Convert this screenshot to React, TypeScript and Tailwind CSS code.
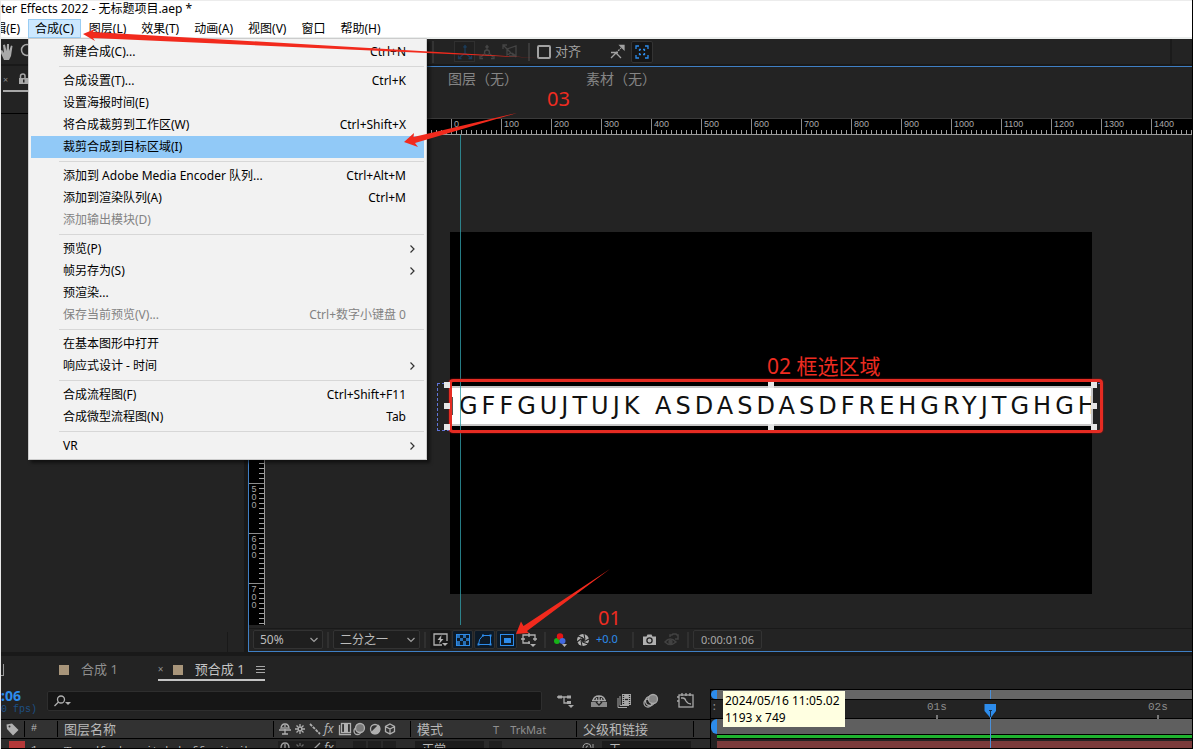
import type { ReactNode } from "react";

type MenuEntry = { label: string; keys?: string; sub?: boolean; disabled?: boolean; active?: boolean };

const menuBar = ["辑(E)", "合成(C)", "图层(L)", "效果(T)", "动画(A)", "视图(V)", "窗口", "帮助(H)"];

const menuGroups: MenuEntry[][] = [
  [{ label: "新建合成(C)...", keys: "Ctrl+N" }],
  [
    { label: "合成设置(T)...", keys: "Ctrl+K" },
    { label: "设置海报时间(E)" },
    { label: "将合成裁剪到工作区(W)", keys: "Ctrl+Shift+X" },
    { label: "裁剪合成到目标区域(I)", active: true },
  ],
  [
    { label: "添加到 Adobe Media Encoder 队列...", keys: "Ctrl+Alt+M" },
    { label: "添加到渲染队列(A)", keys: "Ctrl+M" },
    { label: "添加输出模块(D)", disabled: true },
  ],
  [
    { label: "预览(P)", sub: true },
    { label: "帧另存为(S)", sub: true },
    { label: "预渲染..." },
    { label: "保存当前预览(V)...", keys: "Ctrl+数字小键盘 0", disabled: true },
  ],
  [{ label: "在基本图形中打开" }, { label: "响应式设计 - 时间", sub: true }],
  [
    { label: "合成流程图(F)", keys: "Ctrl+Shift+F11" },
    { label: "合成微型流程图(N)", keys: "Tab" },
  ],
  [{ label: "VR", sub: true }],
];

// divisions under the open menu carry no label
const rulerX = Array.from({ length: 30 }, (_, i) => (i < 4 || i > 18 ? "" : String((i - 4) * 100)));
const rulerY = Array.from({ length: 10 }, (_, i) => (i < 6 ? "" : String((i - 1) * 100)));

function CompositionMenu() {
  return (
    <div className="absolute left-0 top-5 z-20 w-[399px] border border-[#cccccc] bg-[#f2f2f2] p-[2px] text-black shadow-[3px_3px_3px_rgba(0,0,0,0.5)]">
      {menuGroups.map((group, g) => (
        <div key={g}>
          {g > 0 && <div className="my-[3px] ml-7 h-px bg-[#d7d7d7]" />}
          {group.map((item) => (
            <button
              key={item.label}
              disabled={item.disabled}
              className={`flex h-[22px] w-full items-center justify-between pl-8 text-left text-xs whitespace-nowrap ${
                item.active ? "bg-[#91c9f7]" : ""
              } ${item.disabled ? "text-[#838383]" : ""} ${item.sub ? "pr-2" : "pr-[18px]"}`}
            >
              <span>{item.label}</span>
              {item.keys && <span>{item.keys}</span>}
              {item.sub && (
                <svg className="h-2 w-2" viewBox="0 0 8 8" fill="none" stroke="#333" strokeWidth="1.2">
                  <path d="M2.500 0.500L6 4L2.500 7.500" />
                </svg>
              )}
            </button>
          ))}
        </div>
      ))}
    </div>
  );
}

function TopBar() {
  return (
    <header className="bg-white text-xs text-black">
      <div className="h-px bg-[#ececec]" />
      <div className="h-[17px] leading-[15px] whitespace-nowrap">ter Effects 2022 - 无标题项目.aep *</div>
      <nav className="flex h-[21px] gap-px border-b-2 border-[#ebeeed]">
        {menuBar.map((name, i) =>
          i === 1 ? (
            <div key={name} className="relative shrink-0 pt-px">
              <button className="block h-[19px] border border-[#99cdf3] bg-[#cce8ff] px-[6px] leading-[18px]">{name}</button>
              <CompositionMenu />
            </div>
          ) : i === 0 ? (
            <button key={name} className="flex w-[26px] shrink-0 justify-end overflow-hidden pr-[7px] leading-[21px] whitespace-nowrap">
              {name}
            </button>
          ) : (
            <button key={name} className="shrink-0 px-[7px] leading-[21px] whitespace-nowrap">
              {name}
            </button>
          )
        )}
      </nav>
    </header>
  );
}

function Toolbar() {
  return (
    <div className="flex h-[25px] items-center">
      <svg className="h-5 w-8 shrink-0" viewBox="0 0 32 20" fill="none" stroke="#a9a9a9">
        <path d="M3 18L-1 9L1 8L3 11L2 3L4 2.500L5.500 9L6 2H8L8 9L10 3.500L11.500 4L10 14L8 18Z" fill="#a9a9a9" stroke="none" />
        <circle cx="26" cy="8" r="5.500" strokeWidth="1.500" />
      </svg>
      <div className="ml-[399px] h-[22px] w-[2px] bg-[#353535]" />
      <button aria-label="本地轴模式" className="ml-5 flex h-[21px] w-[21px] items-center justify-center border border-[#303030] bg-[#202020]">
        <svg className="h-4 w-4" viewBox="0 0 16 16" fill="none" stroke="#1b3b58" strokeWidth="1.300">
          <path d="M8 2V9L2 14M8 9L14 14M6.500 3.500L8 1.500L9.500 3.500M1.500 11.500V14.500H4.500M14.500 11.500V14.500H11.500" />
        </svg>
      </button>
      <button aria-label="世界轴模式" className="ml-1">
        <svg className="h-4 w-4" viewBox="0 0 16 16" fill="none" stroke="#444" strokeWidth="1.300">
          <path d="M8 2V6M5 10L2 13M11 10L14 13M6.500 3.500L8 1.500L9.500 3.500M1 11.500V14.500H4M15 11.500V14.500H12" />
          <circle cx="8" cy="8.500" r="2.500" />
        </svg>
      </button>
      <button aria-label="视图轴模式" className="ml-[7px]">
        <svg className="h-4 w-4" viewBox="0 0 16 16" fill="none" stroke="#444" strokeWidth="1.300">
          <path d="M1 5V1H5M1 1L9 9M5 5L14 2V12L10 9M5 5V11L9 9L14 13M7 12H13" />
        </svg>
      </button>
      <div className="ml-[10px] h-[18px] w-[2px] bg-[#3a3a3a]" />
      <label className="ml-[7px] flex items-center gap-1 text-[13px] whitespace-nowrap text-[#a2a2a2]">
        <input type="checkbox" className="h-[14px] w-[14px] appearance-none rounded-[2px] border-2 border-[#a2a2a2]" />
        对齐
      </label>
      <button aria-label="边缘外对齐" className="ml-[29px]">
        <svg className="h-4 w-4" viewBox="0 0 16 16" fill="none" stroke="#a2a2a2" strokeWidth="1.300">
          <path d="M1 14L6 9L11 14M1 8.500H8" />
          <path d="M6 9L11 4" strokeDasharray="2 1" />
          <path d="M10 1.500H14V5.500L12.500 4Z" fill="#a2a2a2" />
        </svg>
      </button>
      <button aria-label="内部特征对齐" className="ml-[5px] flex h-[22px] w-[22px] items-center justify-center rounded-[2px] border border-[#333] bg-[#161616]">
        <svg className="h-[14px] w-[14px]" viewBox="0 0 14 14" fill="none" stroke="#2d8ceb" strokeWidth="1.300">
          <path d="M1 4V1H4M10 1H13V4M13 10V13H10M4 13H1V10" />
          <path d="M4.500 6V4.500H6M8 4.500H9.500V6M9.500 8V9.500H8M6 9.500H4.500V8" />
        </svg>
      </button>
      <div className="ml-auto mr-5 h-full w-[2px] bg-[#1b1b1b]" />
    </div>
  );
}

function ProjectPanel() {
  return (
    <aside className="flex w-[243px] shrink-0 flex-col bg-[#232323]">
      <div className="flex h-[48px] items-start border-b border-black">
        <div className="ml-[2px] mt-[7px] flex h-[19px] w-[200px] items-start gap-[10px] border-b-2 border-[#a8a8a8]">
          <span className="w-[6px] text-[9px] leading-[14px] text-[#8a8a8a]">×</span>
          <svg className="h-[13px] w-[11px]" viewBox="0 0 11 13" fill="none">
            <path d="M1.500 6V3Q1.500 1 4 1Q6 1 6 3V5" stroke="#a8a8a8" strokeWidth="1.500" />
            <rect x="0" y="5" width="9" height="6" fill="#a8a8a8" />
            <rect x="4" y="6.500" width="1.500" height="3" fill="#232323" />
          </svg>
        </div>
      </div>
      <div className="flex-1" />
      <div className="mr-4 h-5 border-r border-[#191919]" />
    </aside>
  );
}

function HorizontalRuler() {
  return (
    <div className="flex h-4 shrink-0 overflow-hidden border-b border-[#9a9a9a] bg-black pl-[2px]">
      {rulerX.map((n, i) => (
        <div key={i} className="flex w-[50px] shrink-0 flex-col justify-between border-l border-[#8c8c8c]">
          <span className="h-[11px] pl-[2px] font-['Liberation_Sans',sans-serif] text-[9px] leading-[11px] text-[#a8a8a8]">{n}</span>
          <div className="ml-1 h-1 bg-[repeating-linear-gradient(90deg,#a0a0a0_0_1px,transparent_1px_5px)]" />
        </div>
      ))}
    </div>
  );
}

function VerticalRuler() {
  return (
    <div className="w-4 shrink-0 overflow-hidden border-r border-[#9a9a9a] bg-black pt-[48px]">
      {rulerY.map((n, i) => (
        <div key={i} className="flex h-[50px] justify-between border-t border-[#8c8c8c]">
          <span className="flex w-[10px] flex-col items-center pt-px font-['Liberation_Sans',sans-serif] text-[9px] leading-[8px] text-[#a8a8a8]">
            {n.split("").map((d, k) => (
              <span key={k}>{d}</span>
            ))}
          </span>
          <div className="mt-1 w-[5px] bg-[repeating-linear-gradient(180deg,#a0a0a0_0_1px,transparent_1px_5px)]" />
        </div>
      ))}
    </div>
  );
}

function Canvas() {
  return (
    <div className="relative min-w-0 flex-1 overflow-hidden">
      <div className="absolute left-[185px] top-[97px] h-[362px] w-[642px] bg-black" />
      {/* selected text layer and its bounds */}
      <div className="absolute left-[172px] top-[248px] h-[48px] w-[664px] border border-dashed border-[#5f74d8]" />
      <div className="absolute left-[185px] top-[245px] h-[53px] w-[642px] bg-black" />
      <div className="absolute left-[186px] top-[251px] flex h-[40px] w-[642px] items-center overflow-hidden border-y-2 border-r-2 border-[#c8c6c6] bg-white font-['DejaVu_Sans',sans-serif] text-2xl tracking-[4px] whitespace-nowrap text-[#111]">
        <span className="mr-[6px] h-[18px] w-[2px] shrink-0 bg-[#555]" />
        GFFGUJTUJK ASDASDASDFREHGRYJTGHGH
      </div>
      <div className="absolute left-[195px] top-0 h-full w-px bg-[#2f9aa5]/80" />
      <div className="absolute left-[184px] top-[244px] h-[54px] w-[654px] rounded-[4px] border-[3px] border-[#e52b22] shadow-[0_0_2px_#a01010]" />
      <svg className="absolute left-[179px] top-[247px] h-[50px] w-[654px]" viewBox="0 0 654 50" fill="#e6e6e6">
        <path d="M0 0h6v6h-6zM0 21h6v6h-6zM0 42h6v6h-6zM647 0h6v6h-6zM647 21h6v6h-6zM647 42h6v6h-6zM324 0h6v6h-6zM324 42h6v6h-6z" />
      </svg>
      <span className="absolute left-[502px] top-[216px] text-[21px] leading-[30px] whitespace-nowrap text-[#ee2c21]">02 框选区域</span>
      <span className="absolute left-[333px] top-[468px] text-xl leading-[30px] text-[#ee2c21]">01</span>
    </div>
  );
}

function FooterSelect({ label, options, width }: { label: string; options: string[]; width: string }) {
  return (
    <div className={`relative h-[19px] ${width}`}>
      <select aria-label={label} className="block h-full w-full appearance-none rounded-[2px] border border-[#333] bg-[#1f1f1f] px-[6px] text-xs text-[#bcbcbc]">
        {options.map((o) => (
          <option key={o}>{o}</option>
        ))}
      </select>
      <svg className="pointer-events-none absolute right-1 top-[7px] h-[6px] w-[10px]" viewBox="0 0 10 6" fill="none" stroke="#a0a0a0" strokeWidth="1.200">
        <path d="M1.500 1L5 4.500L8.500 1" />
      </svg>
    </div>
  );
}

function Toggle({ label, on, children }: { label: string; on?: boolean; children: ReactNode }) {
  return (
    <button
      aria-label={label}
      className={`flex h-[19px] w-[21px] items-center justify-center rounded-[2px] border ${on ? "border-[#303030] bg-[#0c1a28]" : "border-[#1b1b1b] bg-[#171717]"}`}
    >
      {children}
    </button>
  );
}

function ViewerFooter() {
  return (
    <div className="mt-[3px] flex h-[23px] shrink-0 items-center border-t border-[#191919] pb-px pl-1 text-xs">
      <FooterSelect label="放大率" options={["50%"]} width="w-[70px]" />
      <div className="mx-1 h-4 w-[2px] bg-[#303030]" />
      <FooterSelect label="分辨率" options={["二分之一"]} width="w-[87px]" />
      <div className="mx-1 h-4 w-[2px] bg-[#303030]" />
      <div className="flex gap-px">
        <Toggle label="快速预览">
          <svg className="h-[14px] w-[15px] shrink-0" viewBox="0 0 15 14" fill="none" stroke="#b0b0b0" strokeWidth="1.300">
            <path d="M9 12H1V1H14V8" />
            <path d="M8.500 2L4.500 7H7L6 11L10.500 6H8Z" fill="#b0b0b0" stroke="none" />
            <path d="M9 10H15L12 13Z" fill="#b0b0b0" stroke="none" />
          </svg>
        </Toggle>
        <Toggle label="透明网格" on>
          <svg className="h-3 w-[14px] shrink-0" viewBox="0 0 14 12" fill="none">
            <rect x="0.500" y="0.500" width="13" height="11" stroke="#2d8ceb" />
            <path d="M1 1h3v3h-3zM7 1h3v3h-3zM4 4h3v3h-3zM10 4h3v3h-3zM1 7h3v4h-3zM7 7h3v4h-3z" fill="#286fb5" />
          </svg>
        </Toggle>
        <Toggle label="蒙版可见性" on>
          <svg className="h-3 w-[15px] shrink-0" viewBox="0 0 15 12" fill="none" stroke="#2d8ceb">
            <path d="M1.500 10.500Q1.500 5 6 1.500H13.500V10.500Z" />
            <path d="M5 .500h2v2h-2zM12.500 .500h2v2h-2zM.500 9.500h2v2h-2zM12.500 9.500h2v2h-2z" fill="#2d8ceb" stroke="none" />
          </svg>
        </Toggle>
        <Toggle label="目标区域" on>
          <svg className="h-3 w-[14px] shrink-0" viewBox="0 0 14 12" fill="none">
            <rect x="0.500" y="0.500" width="13" height="11" stroke="#2d8ceb" />
            <rect x="4" y="4" width="7" height="5" fill="#2d8ceb" />
          </svg>
        </Toggle>
        <button aria-label="网格和参考线" className="flex w-[21px] items-center justify-center">
          <svg className="h-4 w-4 shrink-0" viewBox="0 0 16 16" fill="none" stroke="#b0b0b0" strokeWidth="1.300">
            <path d="M9 11H2V3H14V9M8 1V5M8 9V12M0 7H4M12 7H16" />
            <path d="M9 12H15L12 15Z" fill="#b0b0b0" stroke="none" />
          </svg>
        </button>
      </div>
      <div className="mx-[5px] h-4 w-[2px] bg-[#303030]" />
      <button aria-label="显示通道" className="ml-[2px]">
        <svg className="h-4 w-4" viewBox="0 0 16 16">
          <circle cx="4" cy="9" r="3" fill="#17b317" />
          <circle cx="7" cy="4.500" r="3.200" fill="#e31414" />
          <circle cx="9.500" cy="9" r="3" fill="#4268e0" />
          <path d="M9 12H14L11.500 15Z" fill="#b0b0b0" />
        </svg>
      </button>
      <button aria-label="重置曝光度" className="ml-[7px]">
        <svg className="h-[14px] w-[14px]" viewBox="0 0 14 14">
          <circle cx="7" cy="7" r="6" fill="#b0b0b0" />
          <circle cx="7" cy="7" r="2" fill="#222" />
          <path d="M7 5L2 3M9 6.500L8 1M8.500 8.500L13 6M6.500 9L12 11M5 7.500L6 13M5.200 5.800L1 9" stroke="#222" strokeWidth="1.100" />
        </svg>
      </button>
      <span className="ml-[6px] w-8 text-[11px] text-[#2d8ceb]">+0.0</span>
      <div className="ml-1 h-4 w-[2px] bg-[#303030]" />
      <button aria-label="拍摄快照" className="ml-2">
        <svg className="h-[14px] w-[15px]" viewBox="0 0 15 14">
          <path d="M1 3.500H4.500L5.500 1.500H9.500L10.500 3.500H14V12H1Z" fill="#b0b0b0" />
          <circle cx="7.500" cy="7.500" r="2.600" fill="#b0b0b0" stroke="#222" strokeWidth="1.300" />
        </svg>
      </button>
      <button aria-label="显示快照" className="ml-[7px]">
        <svg className="h-[14px] w-4" viewBox="0 0 16 14" fill="none" stroke="#424242" strokeWidth="1.500">
          <path d="M1 9Q6 3 12 9Q6 14 1 9Z" />
          <circle cx="6.500" cy="9" r="1.500" fill="#424242" />
          <path d="M6 4V2H8L9 1H12L13 2H14V6H11" />
        </svg>
      </button>
      <div className="ml-[7px] h-4 w-[2px] bg-[#303030]" />
      <button className="ml-1 h-[19px] w-[69px] rounded-[2px] border border-[#333] text-center text-[11px] leading-[17px] whitespace-nowrap text-[#a8a8a8]">
        0:00:01:06
      </button>
    </div>
  );
}

function Viewer() {
  return (
    <section className="flex min-w-0 flex-1 flex-col border-y border-l border-[#3f7fc4] bg-[#232323]">
      <div className="flex h-[51px] shrink-0 gap-[68px] pl-[199px] pt-[2px] text-sm whitespace-nowrap text-[#858585]">
        <span>图层（无）</span>
        <span>素材（无）</span>
      </div>
      <div className="h-px shrink-0 bg-[#3a3a3a]" />
      <HorizontalRuler />
      <div className="flex min-h-0 flex-1">
        <VerticalRuler />
        <Canvas />
      </div>
      <ViewerFooter />
    </section>
  );
}

function SwitchIcons() {
  return (
    <svg className="h-[14px] w-[122px]" viewBox="0 0 122 14" fill="none" stroke="#b0b0b0" strokeWidth="1.300">
      {/* shy */}
      <path d="M1 8H13M3 7Q3 2 7 2Q11 2 11 7M7 3V12M4 12H10" />
      <path d="M5 5V7M9 5V7" />
      {/* collapse */}
      <path d="M22 2V5M22 9V12M17 7H20M24 7H27M18.500 3.500L20.500 5.500M25.500 3.500L23.500 5.500M18.500 10.500L20.500 8.500M25.500 10.500L23.500 8.500" />
      <circle cx="22" cy="7" r="1.800" />
      {/* quality */}
      <path d="M32 2L42 12" strokeDasharray="3 1" strokeWidth="1.800" />
      {/* frame blend */}
      <path d="M61.500 3V12.500H73" />
      <rect x="63.500" y="1.500" width="9" height="9" />
      <rect x="66" y="2" width="4" height="8" fill="#b0b0b0" stroke="none" />
      {/* motion blur */}
      <circle cx="79.500" cy="9" r="3.500" />
      <circle cx="82" cy="6" r="4.500" fill="#7a7a7a" />
      {/* adjustment */}
      <circle cx="97" cy="7" r="4.500" />
      <path d="M100.500 3.500A4.800 4.800 0 0 1 93.500 10.500Z" fill="#b0b0b0" />
      {/* 3d */}
      <path d="M112 2L116.500 4.500V9.500L112 12L107.500 9.500V4.500ZM107.500 4.500L112 7L116.500 4.500M112 7V12" />
      <text x="46" y="11" fill="#b0b0b0" stroke="none" fontSize="12" fontStyle="italic" fontFamily="Noto Sans">
        fx
      </text>
    </svg>
  );
}

function LayerSwitches() {
  return (
    <svg className="h-[14px] w-[122px]" viewBox="0 0 122 14" fill="none" stroke="#a0a0a0" strokeWidth="1.300">
      <path d="M0 0H58V14H0ZM75 0H88V14H75ZM90 0H103V14H90ZM105 0H118V14H105Z" fill="#1f1f1f" stroke="none" />
      <path d="M1 8H13M3 7Q3 2 7 2Q11 2 11 7M7 3V12" />
      <path d="M22 2V5M18.500 3.500L20.500 5.500M25.500 3.500L23.500 5.500" stroke="#666" />
      <path d="M42 2L32 12" />
      <text x="46" y="11" fill="#b0b0b0" stroke="none" fontSize="12" fontStyle="italic" fontFamily="Noto Sans">
        fx
      </text>
    </svg>
  );
}

function TimelineControls() {
  return (
    <div className="flex h-[30px] shrink-0 items-start">
      <div className="w-[46px] shrink-0">
        <div className="text-sm leading-[13px] font-bold text-[#2d8ceb]">:06</div>
        <div className="font-['Liberation_Mono',monospace] text-[10px] leading-[16px] whitespace-nowrap text-[#1d4f84]">0 fps)</div>
      </div>
      <div className="relative mt-[2px] w-[495px] shrink-0">
        <input aria-label="搜索图层" className="block h-5 w-full rounded-[2px] border border-[#2e2e2e] bg-[#161616] pl-7 text-xs text-[#b0b0b0]" />
        <svg className="pointer-events-none absolute left-[7px] top-1 h-3 w-[17px]" viewBox="0 0 17 12" fill="none" stroke="#b0b0b0" strokeWidth="1.300">
          <circle cx="7" cy="4.500" r="3.500" />
          <path d="M4.500 7L0.500 11" />
          <path d="M11 7H17L14 10Z" fill="#b0b0b0" stroke="none" />
        </svg>
      </div>
      <svg className="ml-[14px] mt-[2px] h-5 w-[140px] shrink-0" viewBox="0 0 140 20" fill="none" stroke="#a8a8a8" strokeWidth="1.300">
        {/* flowchart */}
        <path d="M1 6H12M8 6V12H12" />
        <path d="M2 4.500h4v3h-4zM11 4.500h4v3h-4zM11 10h4v3h-4z" fill="#a8a8a8" stroke="none" />
        <path d="M12 14H18L15 17Z" fill="#a8a8a8" stroke="none" />
        {/* shy layers */}
        <path d="M35 11H51V16H35Z" fill="#8a8a8a" stroke="none" />
        <path d="M37 9.500Q38 5 43 5Q48 5 49 9.500M36 9.500H50M43 5V14M40.500 9V7M45.500 9V7" />
        <path d="M40 11L43 14L46 11" stroke="#232323" />
        {/* frame blending */}
        <path d="M62 7V16.500H71M64 5V14.500H73" strokeWidth="1" />
        <rect x="66" y="3" width="9" height="11" fill="#a8a8a8" stroke="none" />
        <path d="M67.500 4V13M73.500 4V13" stroke="#232323" strokeDasharray="1 1" />
        <path d="M69 8.500H72" stroke="#232323" />
        {/* motion blur */}
        <circle cx="92" cy="12" r="4" />
        <circle cx="94" cy="10" r="4.500" />
        <circle cx="97" cy="8" r="4.500" fill="#858585" />
        {/* graph editor */}
        <rect x="123" y="4" width="14" height="12" />
        <path d="M121 6H123M121 10H123M126 2V5M130 2V5M134 2V5M125 7H127Q129 7 130 10Q132 13 135 13" />
      </svg>
    </div>
  );
}

function LayerTable() {
  const th = "h-4 border-l border-black pl-[6px] text-left";
  return (
    <div className="flex min-h-0 flex-1 flex-col overflow-hidden border-t border-black">
      <div className="flex h-[18px] shrink-0 items-center bg-[#323232] text-[13px] leading-4 whitespace-nowrap text-[#b8b8b8]">
        <div className="w-[23px] pl-[5px]">
          <svg className="h-[13px] w-[13px]" viewBox="0 0 13 13">
            <path d="M0.500 1.500L6 0.500L12.500 7L7 12.500L1 6Z" fill="#b0b0b0" />
            <circle cx="3.500" cy="3.500" r="1" fill="#323232" />
          </svg>
        </div>
        <div className={`${th} w-[33px] font-['Liberation_Mono',monospace] text-[10px]`}>#</div>
        <div className={`${th} w-[216px]`}>图层名称</div>
        <div className="flex h-4 w-[137px] items-center border-l border-black pl-1">
          <SwitchIcons />
        </div>
        <div className={`${th} w-[166px]`}>
          模式
          <span className="pl-[50px] text-[11px] text-[#8f8f8f]">T</span>
          <span className="pl-[11px] text-[11px] text-[#8f8f8f]">TrkMat</span>
        </div>
        <div className={`${th} w-[117px]`}>父级和链接</div>
        <div className={`${th} flex-1`} />
      </div>
      <div className="flex flex-1 items-start border-t border-black bg-[#2b2b2b] pt-[2px] font-['Liberation_Mono',monospace] text-[11px] leading-[18px] whitespace-nowrap text-[#b8b8b8]">
        <div className="ml-2 h-[10px] w-4 bg-[#b53838]" />
        <span className="w-[39px] pl-[6px]">1</span>
        <span className="w-[210px] font-['Liberation_Serif',serif] font-bold">
          T<span className="pl-2 font-['Liberation_Mono',monospace] font-normal">asdfrehgryjtghghgffgujtujk</span>
        </span>
        <div className="w-[141px] pl-1">
          <LayerSwitches />
        </div>
        <select aria-label="模式" className="h-4 w-[69px] appearance-none bg-[#1c1c1c] pl-[7px] font-['Noto_Sans_CJK_SC',sans-serif] text-xs">
          <option>正常</option>
        </select>
        <div className="ml-[5px] h-4 w-[13px] bg-[#1f1f1f]" />
        <svg className="ml-[80px] mt-px h-3 w-3" viewBox="0 0 12 12" fill="none" stroke="#a0a0a0">
          <path d="M11 2V8Q10 11 6 11Q1 11 1 6Q1 1.500 5 1.500Q9 1.500 9 5.500Q8 8 6 8Q4 8 4 6Q4 4 6 4" />
        </svg>
        <select aria-label="父级和链接" className="ml-2 h-4 w-[89px] appearance-none bg-[#1c1c1c] pl-[7px] font-['Noto_Sans_CJK_SC',sans-serif] text-xs">
          <option>无</option>
        </select>
      </div>
    </div>
  );
}

function TimeRuler() {
  return (
    <div className="relative flex min-w-0 flex-1 flex-col overflow-hidden border-l border-black">
      <div className="flex h-[10px] shrink-0 border-t border-black">
        <div className="h-full w-[6px] rounded-l-full bg-[#2d8ceb]" />
        <div className="flex-1 bg-[#666]" />
      </div>
      <div className="flex h-5 shrink-0 border-y border-black bg-[#232323] font-['Liberation_Mono',monospace] text-[11px] leading-[15px] text-[#8c8c8c]">
        <div className="w-[216px]">:</div>
        <div className="flex w-[221px] flex-col">
          <span>01s</span>
          <span className="ml-[9px] h-1 w-[2px] shrink-0 bg-[#777]" />
        </div>
        <div className="flex flex-col">
          <span>02s</span>
          <span className="ml-[9px] h-1 w-[2px] shrink-0 bg-[#777]" />
        </div>
      </div>
      <div className="flex h-[15px] shrink-0">
        <div className="h-full w-[6px] rounded-l-full bg-[#2d8ceb]" />
        <div className="flex-1 bg-[#5f5f5f]" />
      </div>
      <div className="ml-[6px] h-[5px] shrink-0 border-y border-black bg-[#1fb32f]" />
      <div className="ml-[6px] mt-[2px] flex-1 bg-[#7b3b3b]" />
      {/* current time indicator */}
      <svg className="absolute left-[273px] top-0 h-[60px] w-[12px]" viewBox="0 0 12 60">
        <path d="M6.500 1V10M6.500 28V60" stroke="#4a8fd8" />
        <path d="M0.500 15H12V22L6.500 29L0.500 22Z" fill="#2d8ceb" />
        <path d="M5 21.500H8M6.500 21V28" stroke="#14304d" />
      </svg>
    </div>
  );
}

function Timeline() {
  return (
    <section className="flex h-[93px] shrink-0 flex-col border-b border-black bg-[#232323]">
      <div className="flex h-[33px] shrink-0 items-start pt-1 text-[13px] leading-[19px] whitespace-nowrap text-[#8f8f8f]">
        <span className="mt-1 h-3 w-[3px] border-b border-r border-[#999]" />
        <button className="ml-[55px] flex items-center gap-3">
          <span className="h-[10px] w-[10px] bg-[#a8957a]" />
          合成 1
        </button>
        <button className="ml-10 flex items-center border-b-2 border-[#c4c4c4] text-[#c4c4c4]">
          <span className="w-[15px] text-left text-[10px] text-[#8f8f8f]">×</span>
          <span className="mr-3 h-[10px] w-[10px] bg-[#a8957a]" />
          预合成 1
          <svg className="ml-[11px] h-[9px] w-[9px]" viewBox="0 0 9 9" stroke="#a8a8a8">
            <path d="M0 1.500H9M0 4.500H9M0 7.500H9" />
          </svg>
        </button>
      </div>
      <div className="flex min-h-0 flex-1">
        <div className="flex w-[709px] shrink-0 flex-col">
          <TimelineControls />
          <LayerTable />
        </div>
        <TimeRuler />
      </div>
    </section>
  );
}

function Annotations() {
  return (
    <div className="pointer-events-none absolute inset-0 z-30">
      <svg className="absolute -left-px top-0 h-[749px] w-[1193px]" viewBox="0 0 1193 749" fill="#f22a1d">
        <path d="M83 34L95 29L93 32L540 58L93 38L95 41Z" />
        <path d="M404 142L414 133L413.500 137L517 113L415 143L418 147Z" />
        <path d="M516 634L521 621.500L523.500 626L610 569L527 631L529 633Z" />
      </svg>
      <span className="absolute left-[546px] top-[84px] text-xl leading-[30px] text-[#ee2c21]">03</span>
      <div className="absolute left-[722px] top-[691px] h-9 w-[122px] bg-[#ffffe1] px-[2px] pt-px text-xs leading-[17px] whitespace-nowrap text-black">
        2024/05/16 11:05.02
        <br />
        1193 x 749
      </div>
    </div>
  );
}

export default function App() {
  return (
    <div className="relative flex h-screen flex-col overflow-hidden border-l border-r border-l-[#e8e8e8] border-r-black bg-[#232323] font-['Noto_Sans','Noto_Sans_CJK_SC',sans-serif]">
      <TopBar />
      <Toolbar />
      <main className="flex min-h-0 flex-1 gap-1 bg-[#191919] pb-1 pt-[2px]">
        <ProjectPanel />
        <Viewer />
      </main>
      <Timeline />
      <Annotations />
    </div>
  );
}
